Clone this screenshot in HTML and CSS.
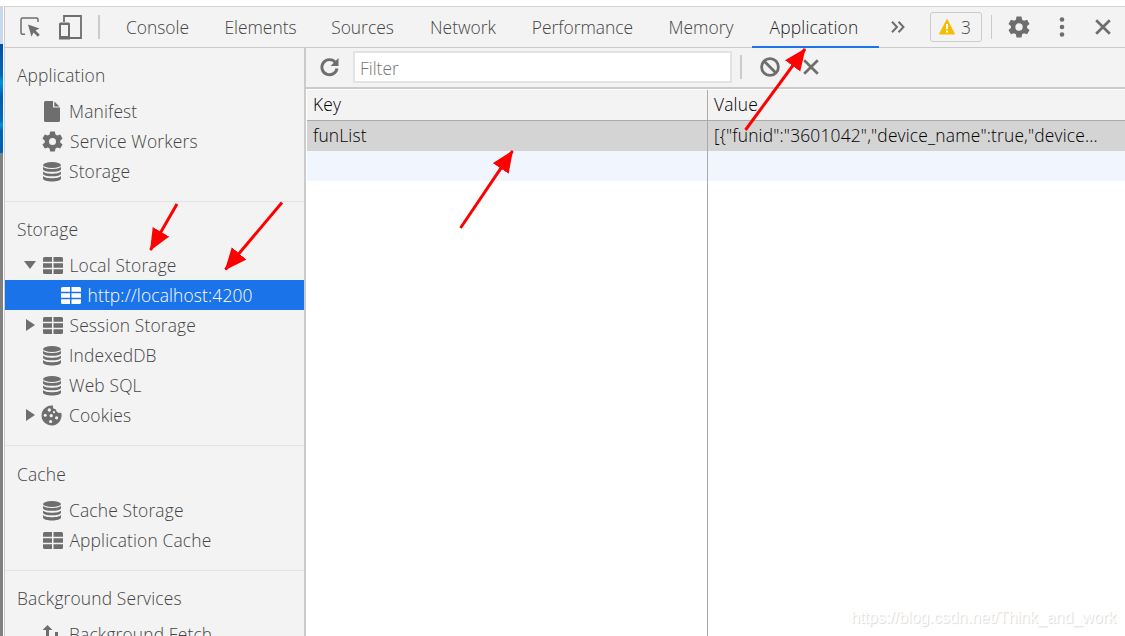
FILE: index.html
```html
<!DOCTYPE html>
<html lang="en">
<head>
<meta charset="utf-8">
<title>DevTools - Application</title>
<link rel="stylesheet" href="styles.css">
</head>
<body>

<svg class="sprite" xmlns="http://www.w3.org/2000/svg">
  <symbol id="i-table" viewBox="0 0 20 18">
    <path d="M1.5 0H9v4.7H0V1.5Q0 0 1.5 0zM10.5 0h8Q20 0 20 1.5v3.2h-9.5zM0 6.2h9v4.6H0zM10.5 6.2H20v4.6h-9.5zM0 12.3h9V17H1.5Q0 17 0 15.5zM10.5 12.3H20v3.2q0 1.5-1.5 1.5h-8z"/>
  </symbol>
  <symbol id="i-db" viewBox="0 0 18 20">
    <ellipse cx="9" cy="3" rx="9" ry="3"/>
    <path d="M0 4.8c2 3 16 3 18 0v2.400c0 3.400-18 3.400-18 0zM0 9.400c2 3 16 3 18 0v2.400c0 3.400-18 3.400-18 0zM0 14c2 3 16 3 18 0v2.600c0 4-18 4-18 0z"/>
  </symbol>
  <symbol id="i-gear" viewBox="0 0 24 24">
    <path fill-rule="evenodd" d="M9.300 0.500h5.400l.7 3.500 2 1.200 3.400-1.200 2.700 4.700-2.700 2.300v2l2.700 2.300-2.700 4.700-3.400-1.200-2 1.200-.7 3.500H9.300L8.600 20l-2-1.200L3.200 20 .5 15.300 3.200 13v-2L.5 8.700 3.200 4l3.400 1.200 2-1.200zM12 8a4 4 0 1 0 0 8 4 4 0 0 0 0-8z"/>
  </symbol>
  <symbol id="i-close" viewBox="0 0 16 16">
    <path d="M1.200 1.200l13.600 13.600M14.800 1.200L1.200 14.800" fill="none" stroke="currentColor" stroke-width="2.700"/>
  </symbol>
</svg>

<div class="page">
  <div class="desktop">
    <div class="desktop-sky"></div>
    <div class="desktop-blue"></div>
  </div>

  <div class="devtools">
    <div class="toolbar">
      <svg class="icon inspect" viewBox="0 0 20 20" width="20" height="20">
        <path d="M5 17.200H2.500Q1 17.200 1 15.700V2.500Q1 1 2.500 1h14Q18 1 18 2.500V5" fill="none" stroke="currentColor" stroke-width="1.500"/>
        <path d="M8 7.500l11.500 4-4 2 4.300 4.300-2 2-4.300-4.300-2 4.300z"/>
      </svg>
      <svg class="icon device" viewBox="0 0 23 25" width="23" height="25">
        <path d="M5 7V1h17v22H10" fill="none" stroke="currentColor" stroke-width="1.800"/>
        <path fill-rule="evenodd" d="M1.500 7.500h8q1.500 0 1.500 1.500v15.500H0V9q0-1.500 1.500-1.500zM2 10v11h7V10z"/>
      </svg>
      <div class="sep"></div>
      <div class="tabs">
        <div class="tab">Console</div>
        <div class="tab">Elements</div>
        <div class="tab">Sources</div>
        <div class="tab">Network</div>
        <div class="tab">Performance</div>
        <div class="tab">Memory</div>
        <div class="tab active">Application</div>
      </div>
      <svg class="icon more" viewBox="0 0 14 12" width="14" height="12">
        <path d="M1 .8L6 6l-5 5.200M7.500 .8l5 5.200-5 5.200" fill="none" stroke="currentColor" stroke-width="2"/>
      </svg>
      <div class="warnings">
        <svg viewBox="0 0 16 16" width="16" height="16">
          <path d="M8 .5L15.500 15H.5z" fill="#f4bd00" stroke="#f4bd00" stroke-linejoin="round"/>
          <path d="M7 5h2v5H7zM7 11.500h2v2H7z" fill="#fff"/>
        </svg>
        <span>3</span>
      </div>
      <div class="sep thin"></div>
      <svg class="icon settings" width="22" height="22"><use href="#i-gear"/></svg>
      <svg class="icon dots" viewBox="0 0 6 20" width="6" height="20">
        <circle cx="3" cy="2.500" r="2.300"/><circle cx="3" cy="10" r="2.300"/><circle cx="3" cy="17.500" r="2.300"/>
      </svg>
      <svg class="icon close" width="16" height="16"><use href="#i-close"/></svg>
    </div>

    <div class="main">
      <div class="sidebar">
        <div class="group">
          <div class="group-title">Application</div>
          <div class="item"><span class="arrow"></span>
            <svg class="icon file" viewBox="0 0 16 21" width="16" height="21"><path d="M1.500 0H9v6.500h7V19.500q0 1.500-1.500 1.500h-13Q0 21 0 19.500v-18Q0 0 1.500 0zM10.300 .5L15.500 5.500h-5.200z"/></svg>
            <span class="label">Manifest</span></div>
          <div class="item"><span class="arrow"></span><svg class="icon" width="21" height="21"><use href="#i-gear"/></svg><span class="label">Service Workers</span></div>
          <div class="item"><span class="arrow"></span><svg class="icon db" width="18" height="20"><use href="#i-db"/></svg><span class="label">Storage</span></div>
        </div>

        <div class="group">
          <div class="group-title">Storage</div>
          <div class="item"><span class="arrow down"></span><svg class="icon table" width="20" height="18"><use href="#i-table"/></svg><span class="label">Local Storage</span></div>
          <div class="item child selected"><span class="arrow"></span><svg class="icon table" width="20" height="18"><use href="#i-table"/></svg><span class="label">http://localhost:4200</span></div>
          <div class="item"><span class="arrow right"></span><svg class="icon table" width="20" height="18"><use href="#i-table"/></svg><span class="label">Session Storage</span></div>
          <div class="item"><span class="arrow"></span><svg class="icon db" width="18" height="20"><use href="#i-db"/></svg><span class="label">IndexedDB</span></div>
          <div class="item"><span class="arrow"></span><svg class="icon db" width="18" height="20"><use href="#i-db"/></svg><span class="label">Web SQL</span></div>
          <div class="item"><span class="arrow right"></span>
            <svg class="icon cookie" viewBox="0 0 21 21" width="21" height="21">
              <path d="M12 .6C11.500 3 13 4.600 15 4.200c-.2 2.600 2.500 4.300 5.200 3.600A10 10 0 1 1 12 .6z"/>
              <g fill="#f3f3f3"><circle cx="8.300" cy="5" r="1.700"/><circle cx="4.200" cy="10.200" r="1.500"/><circle cx="10.200" cy="10.700" r="1.600"/><circle cx="15.600" cy="12.800" r="1.600"/><circle cx="9.600" cy="16.500" r="1.600"/><circle cx="13" cy="7.200" r="1.100"/></g>
            </svg>
            <span class="label">Cookies</span></div>
        </div>

        <div class="group cache">
          <div class="group-title">Cache</div>
          <div class="item"><span class="arrow"></span><svg class="icon db" width="18" height="20"><use href="#i-db"/></svg><span class="label">Cache Storage</span></div>
          <div class="item"><span class="arrow"></span><svg class="icon table" width="20" height="18"><use href="#i-table"/></svg><span class="label">Application Cache</span></div>
        </div>

        <div class="group">
          <div class="group-title">Background Services</div>
          <div class="item"><span class="arrow"></span>
            <svg class="icon db" viewBox="0 0 18 20" width="18" height="20"><path d="M4.500 0l5 5H6v9H3V5H-.5zM12 7h3v8h3.500l-5 5-5-5H12z"/></svg>
            <span class="label">Background Fetch</span></div>
        </div>
      </div>

      <div class="content">
        <div class="filterbar">
          <svg class="icon refresh" viewBox="0 0 19 19" width="19" height="19">
            <path d="M15.500 4.500A7.600 7.600 0 1 0 17 10.500" fill="none" stroke="currentColor" stroke-width="2.900"/>
            <path d="M18.500 0v8h-8z"/>
          </svg>
          <input class="filter" type="text" placeholder="Filter">
          <div class="sep"></div>
          <svg class="icon clear" viewBox="0 0 20 20" width="20" height="20">
            <path d="M4 4l12 12" stroke="currentColor" stroke-width="2.800"/>
            <circle cx="10" cy="10" r="8.400" fill="none" stroke="currentColor" stroke-width="2.800"/>
          </svg>
          <svg class="icon delete" width="16" height="16"><use href="#i-close"/></svg>
        </div>
        <div class="grid">
          <div class="row head"><div class="cell">Key</div><div class="cell">Value</div></div>
          <div class="row current"><div class="cell">funList</div><div class="cell value">[{"funid":"3601042","device_name":true,"device...</div></div>
          <div class="row odd"><div class="cell"></div><div class="cell"></div></div>
          <div class="row filler"><div class="cell"></div><div class="cell"></div></div>
        </div>
      </div>
    </div>
  </div>

  <!-- red pointer arrows -->
  <svg class="arrows" viewBox="0 0 1125 636" width="1125" height="636">
    <defs>
      <marker id="head" markerUnits="userSpaceOnUse" markerWidth="24" markerHeight="20" refX="21" refY="9.500" orient="auto">
        <path d="M0 0L22 9.500 0 19z" fill="#f00"/>
      </marker>
    </defs>
    <g stroke="#f00" stroke-width="3">
      <path d="M177 204L150.500 250" marker-end="url(#head)"/>
      <path d="M282 202.500L225.500 269.500" marker-end="url(#head)"/>
      <path d="M460.500 228L512.500 151" marker-end="url(#head)"/>
      <path d="M745.500 130L805 49" marker-end="url(#head)"/>
    </g>
  </svg>
  <div class="watermark">https://blog.csdn.net/Think_and_work</div>
</div>

</body>
</html>
```
FILE: styles.css
```css
* {
  box-sizing: border-box;
}

body {
  margin: 0;
  background: #fff;
  font-family: "Open Sans", "Noto Sans", sans-serif;
  font-size: 17.4px;
  font-weight: 300;
  color: #444;
}

.sprite {
  display: none;
}

.page {
  position: relative;
  display: flex;
  width: 1125px;
  height: 636px;
  padding-top: 6px;
  overflow: hidden;
}

.desktop {
  display: flex;
  flex-direction: column;
  width: 3px;
  margin-right: 1px;
  background: #808080;
  border-top: 1px solid #d4d4d4;
}

.desktop-sky {
  height: 37px;
  background: #c9d9ec;
}

.desktop-blue {
  height: 109px;
  background: linear-gradient(#0050a0, #0067b8 28%, #0094dc 35%, #005cb0 48%, #0067b8 70%, #0094dc 74%, #0062b0 80%);
}

.devtools {
  flex: 1;
  display: flex;
  flex-direction: column;
  min-width: 0;
  border-top: 1px solid #d4d4d4;
  border-left: 1px solid #cbcbcb;
  background: #f3f3f3;
}

.icon {
  flex: none;
  fill: currentColor;
  color: #6e6e6e;
}

.toolbar {
  display: flex;
  align-items: center;
  flex: none;
  height: 41px;
  border-bottom: 1px solid #cbcbcb;
}

.inspect {
  margin-left: 15px;
}

.device {
  margin-left: 19px;
}

.sep {
  flex: none;
  width: 2px;
  height: 24px;
  background: #cbcbcb;
}

.sep.thin {
  width: 1px;
  margin-left: 9px;
}

.toolbar .device + .sep {
  margin-left: 16px;
}

.tabs {
  display: grid;
  grid-template-columns: 99px 107px 97px 104px 135px 102px 127px;
  margin-left: 8px;
  align-self: stretch;
}

.tab {
  height: 41px;
  line-height: 41px;
  text-align: center;
}

.tab.active {
  padding-right: 3px;
  color: #1c1c1c;
  letter-spacing: 0.2px;
  border-bottom: 2px solid #1a73e8;
}

.more {
  margin-left: 12px;
}

.warnings {
  display: flex;
  align-items: center;
  justify-content: center;
  gap: 6px;
  width: 52px;
  height: 30px;
  margin-left: 25px;
  padding-right: 2px;
  border: 1px solid #cbcbcb;
  border-radius: 3px;
}

.settings {
  margin-left: 16px;
}

.dots {
  margin-left: 29px;
}

.close {
  margin-left: 30px;
}

.main {
  flex: 1;
  display: flex;
  min-height: 0;
}

.sidebar {
  flex: none;
  width: 301px;
  overflow: hidden;
  border-right: 2px solid #cbcbcb;
  letter-spacing: 0.15px;
}

.group {
  padding: 8px 0 15px;
  border-bottom: 1px solid #e3e3e3;
}

.group.cache {
  padding-top: 9px;
}

.group-title {
  height: 40px;
  padding-left: 12px;
  line-height: 39px;
}

.item {
  display: flex;
  align-items: center;
  height: 30px;
  padding-left: 19px;
}

.item .icon {
  margin-left: 5px;
}

.item .cookie {
  margin: 0 0 0 4px;
}

.item .db {
  margin: 1px 1px 0 6px;
}

.item .file {
  margin: 0 2px 0 7px;
}

.item .table {
  margin: 1px 0 0 6px;
}

.item .label {
  margin-left: 7px;
}

.item .table + .label {
  margin-left: 6.5px;
}

.item.child {
  padding-left: 37px;
}

.item.selected,
.item.selected .icon {
  color: #fff;
}

.item.selected {
  background: #1a73e8;
}

.arrow {
  flex: none;
  width: 13px;
}

.arrow.down::before,
.arrow.right::before {
  content: "";
  display: block;
  width: 0;
  border: solid transparent;
}

.arrow.down::before {
  border-width: 8px 6px 0;
  border-top-color: #6e6e6e;
}

.arrow.right::before {
  margin-left: 2px;
  border-width: 6px 0 6px 9px;
  border-left-color: #6e6e6e;
}

.content {
  flex: 1;
  display: flex;
  flex-direction: column;
  min-width: 0;
}

.filterbar {
  display: flex;
  align-items: center;
  flex: none;
  height: 41px;
  padding-bottom: 1px;
  border-bottom: 2px solid #cbcbcb;
}

.refresh {
  margin-left: 14px;
}

.filter {
  width: 379px;
  height: 32px;
  margin-left: 14px;
  padding: 2px 5px 0;
  border: 2px solid #e3e3e3;
  background: #fff;
  font: inherit;
  outline: none;
}

.filter::placeholder {
  color: #757575;
}

.filterbar .sep {
  margin-left: 8px;
}

.clear {
  margin-left: 18px;
}

.delete {
  margin-left: 23px;
}

.grid {
  flex: 1;
  display: flex;
  flex-direction: column;
  padding: 1px 0 0 1px;
  background: #fff;
  color: #000;
  letter-spacing: 0.17px;
}

.row {
  display: grid;
  grid-template-columns: 401px 1fr;
  height: 30px;
  line-height: 29px;
}

.row.head {
  height: 31px;
  background: #f3f3f3;
  border-bottom: 1px solid #aaa;
}

.row.current {
  background: #d4d4d4;
}

.row.odd {
  background: #f1f6fe;
}

.row.filler {
  flex: 1;
}

.cell {
  padding-left: 6px;
  overflow: hidden;
  white-space: nowrap;
}

.cell:first-child {
  border-right: 1px solid #aaa;
}

.arrows {
  position: absolute;
  top: 0;
  left: 0;
}

.watermark {
  position: absolute;
  right: 9px;
  bottom: 8px;
  font: 16px/20px "Liberation Sans", Arial, sans-serif;
  color: #fff;
  text-shadow: 1px 1px 1px #d8d8d8;
}
```
